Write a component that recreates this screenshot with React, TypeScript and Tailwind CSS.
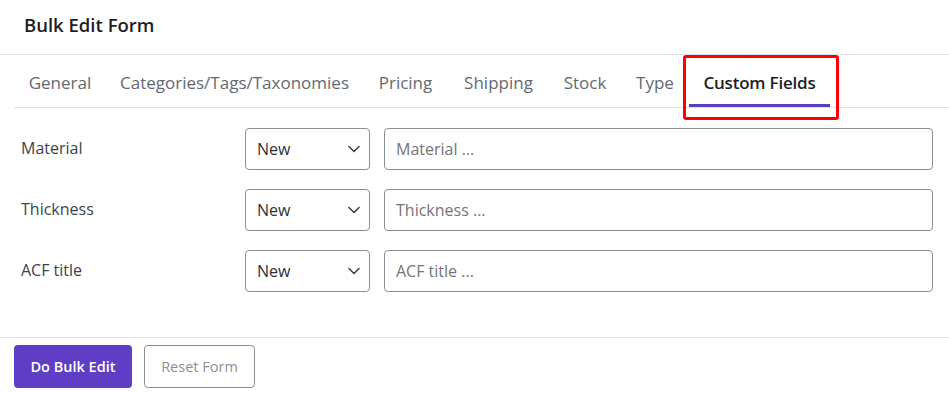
import React from "react";

const tabs: [string, number][] = [
  ["General", 92],
  ["Categories/Tags/Taxonomies", 257],
  ["Pricing", 85],
  ["Shipping", 101],
  ["Stock", 72],
  ["Type", 68],
  ["Custom Fields", 141],
];
const rows = ["Material", "Thickness", "ACF title"];

function Chevron() {
  return (
    <svg width="12" height="8" viewBox="0 0 12 8" fill="none">
      <path d="M1 1.5L6 6.5L11 1.5" stroke="#3c434a" strokeWidth="1.6" strokeLinecap="round" strokeLinejoin="round" />
    </svg>
  );
}

export default function App() {
  return (
    <div className="w-[949px] h-[393px] bg-white overflow-hidden relative" style={{ fontFamily: '"Open Sans", "Noto Sans", sans-serif' }}>
      <div className="h-[55px] border-b border-[#e2e2e2] flex items-center pl-6">
        <h1 className="text-[18.5px] font-semibold text-[#1e1e1e] -mt-[4px]">Bulk Edit Form</h1>
      </div>
      <div className="ml-[14px] border-b border-[#e2e2e2] flex h-[53px] relative">
        {tabs.map(([t, w], i) => {
          const active = i === tabs.length - 1;
          return (
            <div
              key={t}
              style={{ width: w }}
              className={`flex items-center justify-center whitespace-nowrap text-[17px] pt-[4px] ${active ? "text-[#1e1e1e] font-semibold tracking-[-0.2px]" : "text-[#646970] font-medium"} relative`}
            >
              {t}
              {active && <div className="absolute left-0 right-0 bottom-0 h-[3px] bg-[#5b3cc4]" />}
            </div>
          );
        })}
      </div>
      <div className="absolute left-[683px] top-[55px] w-[156px] h-[65px] border-[3px] border-[#ff0000] rounded-[3px]" />
      <div className="pt-[20px] pl-[21px] pr-[16px] flex flex-col gap-[19px]">
        {rows.map((r) => (
          <div key={r} className="flex items-center h-[42px]">
            <div className="w-[224px] text-[16px] text-[#3c434a] -mt-[2px]">{r}</div>
            <div className="w-[125px] h-[42px] border border-[#8c8f94] rounded-[4px] flex items-center justify-between pl-[11px] pr-[9px] text-[16px] text-[#2c3338]">
              <span>New</span>
              <Chevron />
            </div>
            <div className="ml-[14px] flex-1 h-[42px] border border-[#8c8f94] rounded-[4px] flex items-center pl-[11px] text-[16px] text-[#757575]">
              {r} ...
            </div>
          </div>
        ))}
      </div>
      <div className="mt-[45px] border-t border-[#e2e2e2] pt-[7px] pl-[14px] flex gap-[12px]">
        <button className="w-[118px] h-[43px] rounded-[4px] bg-[#5f3dc4] text-white text-[14.5px] font-semibold">Do Bulk Edit</button>
        <button className="w-[111px] h-[43px] rounded-[4px] border border-[#8c8f94] bg-white text-[#8c8f94] text-[14.5px]">Reset Form</button>
      </div>
    </div>
  );
}
